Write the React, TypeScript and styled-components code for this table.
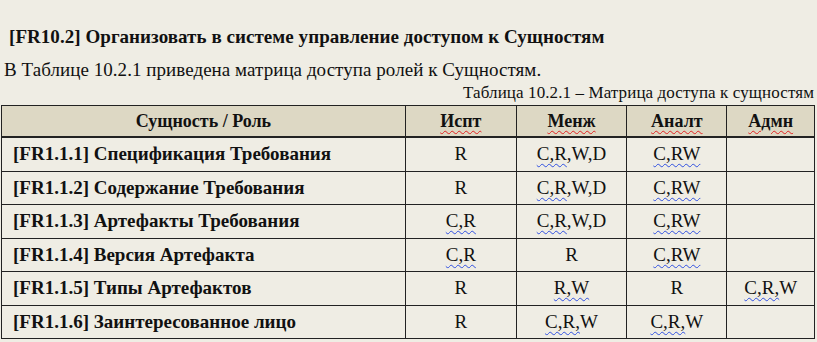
import React from 'react';
import styled, { createGlobalStyle } from 'styled-components';

const GlobalStyle = createGlobalStyle`
  html, body {
    margin: 0;
    padding: 0;
    background: #efede4;
  }
  body {
    font-family: "Liberation Serif", "Times New Roman", serif;
    color: #111;
  }
`;

const Page = styled.div`
  width: 817px;
  height: 342px;
  overflow: hidden;
  padding: 26px 2px 0 1px;
  box-sizing: border-box;
`;

const Heading = styled.h2`
  margin: 0 0 0 8px;
  font-size: 19px;
  font-weight: bold;
  line-height: 22px;
  letter-spacing: 0.05px;
`;

const Lead = styled.p`
  margin: 11px 0 0 3px;
  font-size: 19px;
  line-height: 22px;
  letter-spacing: 0.05px;
`;

const Caption = styled.div`
  text-align: right;
  font-size: 17px;
  line-height: 20px;
  margin-top: 2px;
  margin-right: 1px;
  letter-spacing: 0.1px;
`;

const Table = styled.table`
  border-collapse: collapse;
  table-layout: fixed;
  margin-top: 2px;
`;

const HeadCell = styled.th<{ $w: number }>`
  width: ${({ $w }) => $w}px;
  height: 30px;
  background: #ddd8c4;
  border: 1px solid #222;
  border-bottom: 2px solid #222;
  font-size: 18px;
  font-weight: bold;
  text-align: center;
  padding: 0;
`;

const Row = styled.tr<{ $h: number }>`
  height: ${({ $h }) => $h}px;
`;

const NameCell = styled.td`
  border: 1px solid #222;
  font-size: 19px;
  font-weight: bold;
  padding: 0 0 0 11px;
  white-space: nowrap;
`;

const ValueCell = styled.td`
  border: 1px solid #222;
  font-size: 19px;
  text-align: center;
  padding: 0;
`;

const Spell = styled.span<{ $tone: 'red' | 'blue' }>`
  text-decoration: underline wavy ${({ $tone }) => ($tone === 'red' ? '#e02020' : '#3050e0')};
  text-decoration-thickness: 1px;
  text-underline-offset: 3px;
`;

type Val = { marked: string; rest?: string } | string | null;

const cols = [
  { label: 'Сущность / Роль', w: 404, spell: false },
  { label: 'Испт', w: 111, spell: true },
  { label: 'Менж', w: 110, spell: true },
  { label: 'Аналт', w: 100, spell: true },
  { label: 'Адмн', w: 87, spell: true },
];

const rows: { name: string; vals: Val[] }[] = [
  { name: '[FR1.1.1] Спецификация Требования', vals: ['R', { marked: 'C,R', rest: ',W,D' }, { marked: 'C,RW' }, null] },
  { name: '[FR1.1.2] Содержание Требования', vals: ['R', { marked: 'C,R', rest: ',W,D' }, { marked: 'C,RW' }, null] },
  { name: '[FR1.1.3] Артефакты Требования', vals: [{ marked: 'C,R' }, { marked: 'C,R', rest: ',W,D' }, { marked: 'C,RW' }, null] },
  { name: '[FR1.1.4] Версия Артефакта', vals: [{ marked: 'C,R' }, 'R', { marked: 'C,RW' }, null] },
  { name: '[FR1.1.5] Типы Артефактов', vals: ['R', { marked: 'R,W' }, 'R', { marked: 'C,R,', rest: 'W' }] },
  { name: '[FR1.1.6] Заинтересованное лицо', vals: ['R', { marked: 'C,R,', rest: 'W' }, { marked: 'C,R,', rest: 'W' }, null] },
];

function renderVal(v: Val) {
  if (v === null) return null;
  if (typeof v === 'string') return v;
  return (
    <>
      <Spell $tone="blue">{v.marked}</Spell>
      {v.rest}
    </>
  );
}

export default function App() {
  return (
    <Page>
      <GlobalStyle />
      <Heading>[FR10.2] Организовать в системе управление доступом к Сущностям</Heading>
      <Lead>В Таблице 10.2.1 приведена матрица доступа ролей к Сущностям.</Lead>
      <Caption>Таблица 10.2.1 – Матрица доступа к сущностям</Caption>
      <Table>
        <colgroup>
          {cols.map((c) => (
            <col key={c.label} style={{ width: c.w }} />
          ))}
        </colgroup>
        <thead>
          <tr>
            {cols.map((c) => (
              <HeadCell key={c.label} $w={c.w}>
                {c.spell ? <Spell $tone="red">{c.label}</Spell> : c.label}
              </HeadCell>
            ))}
          </tr>
        </thead>
        <tbody>
          {rows.map((r, idx) => (
            <Row key={r.name} $h={idx % 2 === 0 ? 34 : 33}>
              <NameCell>{r.name}</NameCell>
              {r.vals.map((v, i) => (
                <ValueCell key={i}>{renderVal(v)}</ValueCell>
              ))}
            </Row>
          ))}
        </tbody>
      </Table>
    </Page>
  );
}
